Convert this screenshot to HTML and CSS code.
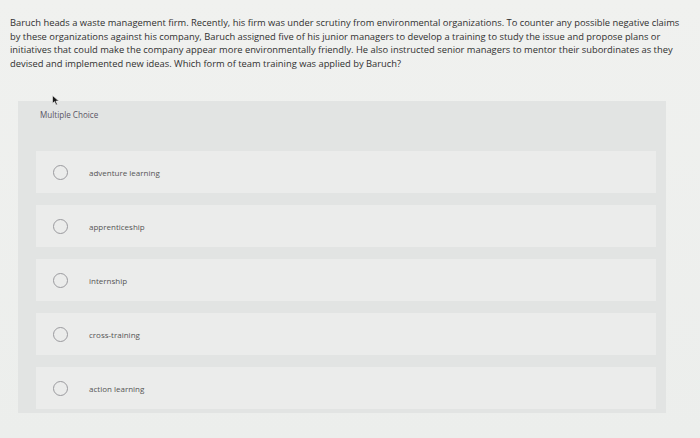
FILE: index.html
```html
<!DOCTYPE html>
<html>
<head>
<meta charset="utf-8">
<link rel="stylesheet" href="styles.css">
</head>
<body>
<div class="page">
  <p class="question">Baruch heads a waste management firm. Recently, his firm was under scrutiny from environmental organizations. To counter any possible negative claims<br>by these organizations against his company, Baruch assigned five of his junior managers to develop a training to study the issue and propose plans or<br>initiatives that could make the company appear more environmentally friendly. He also instructed senior managers to mentor their subordinates as they<br>devised and implemented new ideas. Which form of team training was applied by Baruch?</p>
  <div class="panel">
    <div class="type">Multiple Choice</div>
    <svg class="cursor" width="8" height="11" viewBox="0 0 8 11"><path d="M0.5 0.5 L0.5 8.5 L2.5 6.6 L4 10 L5.4 9.4 L3.9 6.1 L6.8 6.1 Z" fill="#1a1a1a" stroke="#f4f4f4" stroke-width="0.6"/></svg>
    <div class="options">
      <div class="option"><span class="radio"></span><span class="label">adventure learning</span></div>
      <div class="option"><span class="radio"></span><span class="label">apprenticeship</span></div>
      <div class="option"><span class="radio"></span><span class="label">internship</span></div>
      <div class="option"><span class="radio"></span><span class="label">cross-training</span></div>
      <div class="option"><span class="radio"></span><span class="label">action learning</span></div>
    </div>
  </div>
</div>
</body>
</html>
```
FILE: styles.css
```css
html, body {
  margin: 0;
  padding: 0;
  background: #eef0ee;
}
.page {
  width: 700px;
  height: 438px;
  overflow: hidden;
  background: linear-gradient(180deg, #f0f1ef 0%, #eceeec 100%);
  font-family: "Open Sans", "Lato", sans-serif;
}
.question {
  margin: 0;
  padding: 16px 0 0 10px;
  font-size: 9.35px;
  line-height: 13.5px;
  color: #303030;
  white-space: nowrap;
}
.panel {
  position: relative;
  margin: 31px 0 0 18px;
  width: 648px;
  height: 312px;
  background: #e2e4e3;
  box-sizing: border-box;
  padding: 8px 10px 0 18px;
}
.type {
  padding-left: 4px;
  font-size: 8.1px;
  line-height: 12px;
  color: #5a5565;
}
.cursor {
  position: absolute;
  left: 34px;
  top: -6px;
}
.options {
  margin-top: 30px;
  display: flex;
  flex-direction: column;
  gap: 12px;
}
.option {
  height: 42px;
  background: #ebeceb;
  display: flex;
  align-items: center;
  padding-left: 17px;
}
.radio {
  width: 13px;
  height: 13px;
  border: 1.3px solid #9a9a9e;
  border-radius: 50%;
  box-sizing: content-box;
  flex: none;
}
.label {
  margin-left: 21px;
  font-size: 8px;
  color: #555;
}
```
